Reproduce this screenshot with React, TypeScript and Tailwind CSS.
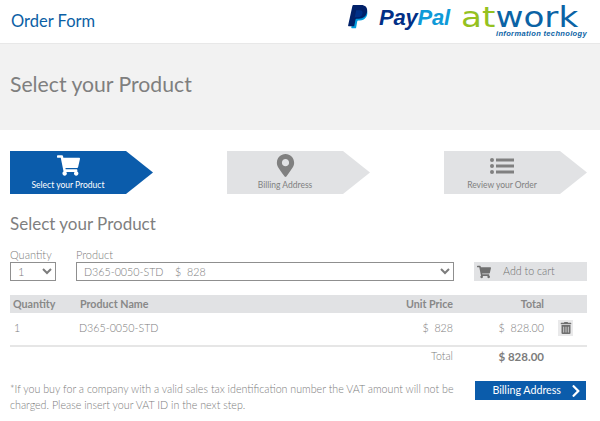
import { FaShoppingCart, FaMapMarkerAlt, FaTrashAlt, FaChevronRight } from "react-icons/fa";
import type { ReactNode } from "react";

function PayPalMark() {
  return (
    <svg viewBox="0 0 24 28" className="h-[27px] w-[24px]">
      <path fill="#009cde" d="M20.5 7.5c.9 4.8-2.2 9.500-7.600 9.500h-1.700c-.5 0-.9.400-1 .9L9 24.500c-.1.400-.4.700-.8.700H4.600c-.4 0-.7-.4-.6-.8L7.500 6h11z" />
      <path fill="#012169" d="M6.500 1h7.700c4 0 6.600 2.300 6.300 6.200-.5 5.200-4 8-8.800 8H9.500c-.6 0-1 .4-1.100 1L7 23H1.300c-.4 0-.7-.4-.6-.8L5.200 1.900c.1-.5.700-.9 1.300-.9z" />
      <path fill="#003087" d="M8.500 6.500h4.500c1.800 0 3 1 2.700 3-.4 2.600-2.300 4.300-5 4.300H8.400c-.5 0-.9.300-1 .8L9 7c.1-.3-.2-.5-.5-.5z" />
    </svg>
  );
}

function ListIcon() {
  return (
    <svg viewBox="0 0 24 16" className="h-[16px] w-[24px] fill-current">
      <circle cx="2" cy="2" r="2" />
      <circle cx="2" cy="8" r="2" />
      <circle cx="2" cy="14" r="2" />
      <rect x="6" y="0.5" width="18" height="3" />
      <rect x="6" y="6.500" width="18" height="3" />
      <rect x="6" y="12.500" width="18" height="3" />
    </svg>
  );
}

function Step({ active, label, icon }: { active?: boolean; label: string; icon: ReactNode }) {
  return (
    <div
      className={`flex h-[43px] w-[143px] flex-col items-center [clip-path:polygon(0_0,116px_0,143px_50%,116px_100%,0_100%)] ${
        active ? "bg-[#0b5cab] text-white" : "bg-[#e1e2e4] text-[#808080]"
      }`}
    >
      <div className="mr-[27px] flex h-[27px] items-center pt-[2px] text-[23px]">{icon}</div>
      <span className="mr-[27px] mt-[1px] text-[8.500px] leading-[12px]">{label}</span>
    </div>
  );
}

export default function App() {
  return (
    <div className="h-[421px] w-[600px] overflow-hidden bg-white font-['Lato',sans-serif] text-[#7c7c7c]">
      {/* Header */}
      <header className="flex h-[43px] justify-between pl-[11px] pr-[13px]">
        <h1 className="self-center text-[16.500px] text-[#0b5fa5]">Order Form</h1>
        <div className="flex items-start pt-[4px]">
          <div className="flex items-center gap-[8px]">
            <PayPalMark />
            <span className="font-['Liberation_Sans',sans-serif] text-[22px] font-bold italic leading-[27px] tracking-[-0.2px] text-[#012f86]">
              Pay<span className="text-[#0f9ad8]">Pal</span>
            </span>
          </div>
          <div className="ml-[11px] flex w-[126px] flex-col items-end">
            <div className="h-[26px] w-full origin-left scale-x-[1.180] whitespace-nowrap font-['DejaVu_Sans',sans-serif] text-[29px] leading-[26px] text-[#0b63a5]">
              <span className="text-[#95c11f]">at</span>work
            </div>
            <span className="-mt-[1px] font-['Liberation_Sans',sans-serif] text-[7.500px] font-bold italic leading-[9px] tracking-[0.35px] text-[#0b63a5]">
              information technology
            </span>
          </div>
        </div>
      </header>

      {/* Title band */}
      <div className="flex h-[87px] items-center border-t border-[#e8e8e8] bg-[#f2f2f2] px-[10px] pb-[4px]">
        <h2 className="text-[21.200px] text-[#7f7f7f]">Select your Product</h2>
      </div>

      <main className="w-[587px] pl-[10px]">
        {/* Steps */}
        <div className="flex justify-between pt-[21px]">
          <Step active label="Select your Product" icon={<FaShoppingCart />} />
          <Step label="Billing Address" icon={<FaMapMarkerAlt />} />
          <Step label="Review your Order" icon={<ListIcon />} />
        </div>

        <h3 className="mt-[19px] text-[17px] leading-[22px] text-[#7f7f7f]">Select your Product</h3>

        {/* Order line form */}
        <div className="mt-[12px] flex items-end">
          <label className="flex w-[66px] flex-col text-[11px] font-light leading-[15px]">
            Quantity
            <select className="h-[19px] w-[46px] border border-[#8f8f8f] bg-white pl-[3px] text-[11px] text-[#7c7c7c]">
              <option>1</option>
            </select>
          </label>
          <label className="flex w-[398px] flex-col text-[11px] font-light leading-[15px]">
            Product
            <select className="h-[19px] w-[378px] border border-[#8f8f8f] bg-white pl-[3px] text-[10.700px] text-[#7c7c7c]">
              <option>D365-0050-STD &nbsp;&nbsp; $ &nbsp;828</option>
            </select>
          </label>
          <button className="flex h-[19px] w-[113px] items-center bg-[#e1e2e4] pl-[3px] text-[10.700px] font-light text-[#707070]">
            <FaShoppingCart className="text-[14px] text-[#6f6f6f]" />
            <span className="ml-[12px]">Add to cart</span>
          </button>
        </div>

        {/* Items table */}
        <div className="mt-[14px] flex h-[18px] items-center bg-[#e1e2e4] text-[10.700px] font-bold text-[#888888]">
          <span className="w-[70px] pl-[3px]">Quantity</span>
          <span className="flex-1">Product Name</span>
          <span className="w-[70px] text-right">Unit Price</span>
          <span className="w-[91px] text-right">Total</span>
          <span className="w-[43px]" />
        </div>
        <div className="flex h-[34px] items-center border-b-2 border-[#e6e6e6] pb-[2px] text-[10.700px] font-light">
          <span className="w-[69px] pl-[4px]">1</span>
          <span className="flex-1">D365-0050-STD</span>
          <span className="w-[70px] text-right">$ &nbsp;828</span>
          <span className="w-[91px] text-right">$ &nbsp;828.00</span>
          <span className="ml-[14px] mr-[14px] flex h-[16px] w-[15px] items-center justify-center bg-[#e9e9ea] text-[12px] text-[#6f6f6f]">
            <FaTrashAlt />
          </span>
        </div>
        <div className="flex h-[19px] items-center text-[10.700px]">
          <span className="flex-1 text-right font-light">Total</span>
          <span className="w-[91px] text-right text-[11.500px] font-bold">$ 828.00</span>
          <span className="w-[43px]" />
        </div>

        {/* Footer */}
        <div className="mt-[15px] flex items-start justify-between">
          <p className="w-[450px] text-[10.700px] font-light leading-[16px]">
            *If you buy for a company with a valid sales tax identification number the VAT amount will not be charged.
            Please insert your VAT ID in the next step.
          </p>
          <button className="mr-[1px] flex h-[19px] w-[111px] items-center justify-end bg-[#0b5cab] pr-[3px] text-[10.700px] text-white">
            Billing Address
            <FaChevronRight className="ml-[8px] text-[14px]" />
          </button>
        </div>
      </main>
    </div>
  );
}
